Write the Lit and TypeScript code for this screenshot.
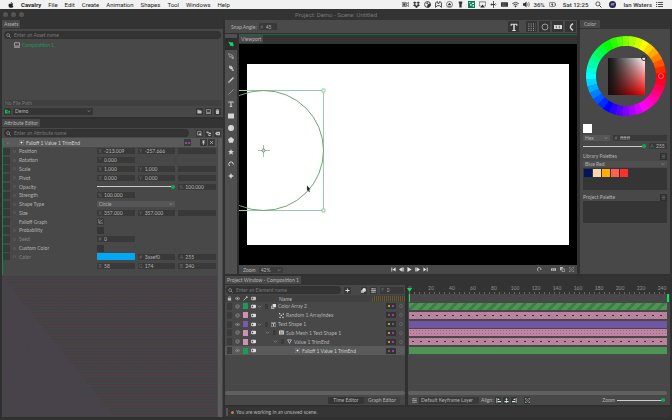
import { LitElement, html, css, svg } from "lit";
import { customElement } from "lit/decorators.js";
import { classMap } from "lit/directives/class-map.js";
import { styleMap } from "lit/directives/style-map.js";

// Every glyph sits on a 12 x 12 grid and is drawn in currentColor.
const glyphs: Record<string, unknown> = {
  apple: svg`<path fill="currentColor" d="M8 0c.1 1.5-1 2.700-2.300 2.600C5.600 1.300 6.700.200 8 0zM6.100 3.300C6.700 3.300 7.300 2.700 8.300 2.700c.9 0 1.700.5 2.200 1.200-2 1.200-1.600 3.900.4 4.600-.6 1.500-1.600 3-2.700 3-.8 0-1.100-.5-2.100-.5s-1.300.5-2.100.5C2.500 11.500 1 8.800 1 6.500c0-2.300 1.500-3.700 3.100-3.700.9 0 1.400.5 2 .5z"/>`,
  camera: svg`<path fill="none" stroke="currentColor" d="M.5 2.500h7v7h-7zM8 5l3.500-2.500v7L8 7"/><path fill="currentColor" d="M2 4h4v4H2z"/>`,
  dropbox: svg`<path fill="currentColor" d="M3 1l3 2-3 2.200L0 3zM9 1l3 2-3 2.200L6 3zM3 5.200L6 7.300 3 9.300 0 7.200zM9 5.200l3 2-3 2.100-3-2zM6 8l3 2-3 2-3-2z"/>`,
  disc: svg`<circle cx="6" cy="6" r="5" fill="none" stroke="currentColor" stroke-width="1.500"/><path fill="currentColor" d="M6 6L11 4A5 5 0 0 1 5 11zM3 4l4-2v3z"/>`,
  controller: svg`<path fill="none" stroke="currentColor" stroke-width="1.500" d="M1 11V3l3-2 1 3h2l1-3 3 2v8L8 8H4z"/>`,
  eject: svg`<circle cx="6" cy="6" r="5.200" fill="none" stroke="currentColor"/><path fill="currentColor" d="M3 7l3-4 3 4zM3 8h6v1.500H3z"/>`,
  flash: svg`<path fill="currentColor" d="M3 1h6v3L8 5v6H4V5L3 4z"/>`,
  airplay: svg`<path fill="none" stroke="currentColor" d="M3 8.500H.5v-7h11v7H9"/><path fill="currentColor" d="M6 6l4 5H2z"/>`,
  updown: svg`<path fill="currentColor" d="M5.300 0h1.400v12H5.300zM1 5.300h10v1.400H1zM3 3.500v5L1 6zM9 3.500v5L11 6z"/>`,
  keyboard: svg`<rect x="0" y="2" width="12" height="8" rx="1" fill="currentColor"/><path stroke="#bbb" d="M2 5h8M2 7.500h8" stroke-dasharray="1"/>`,
  wifi: svg`<path fill="none" stroke="currentColor" stroke-width="1.500" d="M.5 4.500q5.500-4.500 11 0M2.500 7q3.500-3 7 0"/><path fill="currentColor" d="M4 8.500q2-1.500 4 0l-2 2.500z"/>`,
  volume: svg`<path fill="currentColor" d="M0 4h2.500L6 1v10L2.500 8H0z"/><path fill="none" stroke="currentColor" d="M7.500 4q1.500 2 0 4M9.500 2q3 4 0 8"/>`,
  battery: svg`<rect x=".5" y="2.500" width="10" height="7" rx="2" fill="none" stroke="currentColor"/><path fill="currentColor" d="M11 4.500h1v3h-1zM6 3L3 6.500h2.300L5 9l3-3.500H5.800z"/>`,
  search: svg`<circle cx="5" cy="5" r="3.500" fill="none" stroke="currentColor" stroke-width="1.300"/><path stroke="currentColor" stroke-width="1.600" d="M7.500 7.500L11 11"/>`,
  siri: svg`<circle cx="6" cy="6" r="6" fill="#2b2550"/><path fill="#3cc7d8" d="M2 7q4-5 8-3-3 5-8 3z"/><path fill="#e0549b" d="M3 4q5 0 6 4-4 1-6-4z"/>`,
  list: svg`<path stroke="currentColor" stroke-width="1.500" d="M0 2.500h2M3.500 2.500H12M0 6h2M3.500 6H12M0 9.500h2M3.500 9.500H12"/>`,
  lines: svg`<path fill="currentColor" d="M3 3h6v1H3zM3 5.500h6v1H3zM3 8h6v1H3z"/>`,
  monitor: svg`<path fill="none" stroke="currentColor" stroke-width="1.500" d="M1 1.500h10v6.500H1z"/><path fill="currentColor" d="M0 9.500h12v1.700H0z"/>`,
  folder: svg`<path fill="currentColor" d="M1 2h4l1 1.500h5V10.500H1z"/>`,
  tree: svg`<path fill="currentColor" d="M0 1h3l1 1.500h3V11H0zM7.500 4H12v3H7.500zM7.500 8H12v3H7.500z"/><path fill="none" stroke="#222" stroke-width=".8" d="M7 2v9M3 6h4"/>`,
  trash: svg`<path fill="currentColor" d="M2 3.500h8L9.500 12h-7zM2 1.500h2.500V.5h3v1H10V2.800H2z"/>`,
  layers: svg`<path fill="none" stroke="currentColor" stroke-width="1.500" d="M1 1.500h9V6M1 1.500v8h4"/><circle cx="7.500" cy="8" r="2.800" fill="currentColor"/><path stroke="currentColor" stroke-width="1.500" d="M9 10l2 2"/>`,
  branch: svg`<path fill="currentColor" d="M1 1h5v3H1zM7 4h5v3H7zM6 9h5v3H6z"/><path fill="none" stroke="currentColor" stroke-width="1.300" d="M3 3l4 7M5 3l4 2"/>`,
  clear: svg`<path fill="currentColor" fill-rule="evenodd" d="M4 2h8v8H4L0 6zm1.500 2L7 6 5.500 8 8 6.800 10.500 8 9 6l1.500-2L8 5.200z"/>`,
  down: svg`<path fill="none" stroke="currentColor" stroke-width="1.500" d="M2 4l4 4 4-4"/>`,
  bullet: svg`<rect x=".5" y=".5" width="11" height="11" rx="3" fill="#4a4a4a" stroke="currentColor" stroke-width=".7"/><circle cx="6" cy="6" r="2.600" fill="#fff"/>`,
  pin: svg`<path fill="currentColor" d="M3 1h6v1.300H8V6l1.500 2H2.500L4 6V2.300H3zM5.300 8h1.400v4H5.300z"/>`,
  close: svg`<path stroke="currentColor" stroke-width="1.500" d="M2.500 2.500l7 7M9.500 2.500l-7 7"/>`,
  graph: svg`<path fill="none" stroke="currentColor" stroke-width="1.500" d="M2 0v10h10M3 9q2-5 8-7"/>`,
  select: svg`<path fill="currentColor" d="M0 1l4 1.500L10 3l.5 3.500L12 9.500 10 9l-1 2-3-2-2 1-.5-4z"/>`,
  node: svg`<path fill="none" stroke="currentColor" stroke-width="1.300" d="M1 1l3 8 1.500-2.500 3 4.500L10 9.500 7 5.500 9.500 5zM9 8h3v3H9z"/>`,
  pen: svg`<path fill="currentColor" d="M2 1l5 1 3 4-1 2-3 1-4-4zM7 10l3-2 2 3-2 1z"/><path stroke="#444" d="M2 1l4 4"/>`,
  pencil: svg`<path stroke="currentColor" stroke-width="2.300" d="M3 9L11 1"/><path fill="currentColor" d="M0 12l1.500-4 2.500 2.500z"/>`,
  line: svg`<path stroke="currentColor" stroke-width="1.300" d="M1 11L11 1"/>`,
  type: svg`<path fill="currentColor" d="M1 1h10v3.500H9.800L9.300 2.700H7.100v7.800h1.500V12H3.400v-1.500h1.500V2.700H2.700l-.5 1.800H1z"/>`,
  rect: svg`<path fill="currentColor" d="M0 1h12v10H0z"/>`,
  ellipse: svg`<circle cx="6" cy="6" r="6" fill="currentColor"/>`,
  pentagon: svg`<path fill="currentColor" d="M6 0l6 4.500-2 7H2L0 4.500z"/>`,
  star: svg`<path fill="currentColor" d="M6 0l1.700 4.200L12 4.400 8.700 7.200l1 4.400L6 9.200l-3.700 2.400 1-4.400L0 4.400l4.300-.2z"/>`,
  arc: svg`<path fill="none" stroke="currentColor" stroke-width="2" d="M3.500 10A4.500 4.500 0 1 1 10.500 7"/>`,
  spark: svg`<path fill="currentColor" d="M6 0l1.800 4.200L12 6 7.800 7.800 6 12 4.200 7.800 0 6l4.200-1.800z"/>`,
  grid: svg`<path stroke="currentColor" stroke-width="1.500" stroke-dasharray="1.500 2" d="M.5 1.500h11M.5 4.700h11M.5 8h11M.5 11h11"/>`,
  ring: svg`<circle cx="6" cy="6" r="4.500" fill="none" stroke="currentColor" stroke-width="1.300"/>`,
  bars: svg`<path fill="currentColor" d="M0 3h12v6H0z"/><path stroke="#222" d="M3.500 4v4M8 4v4"/>`,
  half: svg`<path fill="none" stroke="currentColor" stroke-width="2" d="M9 1Q1 6 9 11"/>`,
  first: svg`<path fill="currentColor" d="M1 1h2v10H1zM11 1v10L4 6z"/>`,
  prev: svg`<path fill="currentColor" d="M7 1v10L0 6zM8 1h1.500v10H8zM10.500 1H12v10h-1.500z"/>`,
  play: svg`<path fill="currentColor" d="M1 0l10 6-10 6z"/>`,
  next: svg`<path fill="currentColor" d="M5 1v10l7-5zM2.500 1H4v10H2.500zM0 1h1.500v10H0z"/>`,
  last: svg`<path fill="currentColor" d="M9 1h2v10H9zM1 1v10l7-5z"/>`,
  loop: svg`<path fill="none" stroke="currentColor" stroke-width="2" d="M4 10A4.500 4.500 0 1 1 10 6M10 6L7.500 5"/>`,
  copy: svg`<path fill="currentColor" d="M0 0h7v3H4v5H0z"/><path fill="none" stroke="currentColor" stroke-width="1.500" d="M5 4.500h6v6.500H5z"/>`,
  array: svg`<path fill="currentColor" d="M4 0h8v8H4z"/><path fill="#aaa" d="M0 4h3v5h5v3H0z"/>`,
  target: svg`<path fill="none" stroke="currentColor" stroke-width="1.300" d="M1 4V1h3M8 1h3v3M11 8v3H8M4 11H1V8"/><circle cx="6" cy="6" r="2" fill="none" stroke="currentColor"/>`,
  plus: svg`<path fill="currentColor" d="M5 1h2v4h4v2H7v4H5V7H1V5h4z"/>`,
  shapes: svg`<path fill="#aaa" d="M0 5h7v7H0z"/><circle cx="7.500" cy="4.500" r="4.500" fill="currentColor"/>`,
  sliders: svg`<path stroke="currentColor" stroke-width="1.500" d="M0 2h12M0 6h12M0 10h12M4 .5v3M8 4.500v3M5 8.500v3"/>`,
  lock: svg`<path fill="currentColor" d="M2 5h8v6H2z"/><path fill="none" stroke="currentColor" stroke-width="1.500" d="M4 5V2h4v3"/>`,
  eye: svg`<path fill="none" stroke="currentColor" stroke-width="1.300" d="M0 6q6-7 12 0-6 7-12 0z"/><circle cx="6" cy="6" r="2" fill="currentColor"/>`,
  hidden: svg`<circle cx="6" cy="6" r="4.300" fill="none" stroke="currentColor" stroke-width="1.500"/><path fill="none" stroke="currentColor" stroke-width="1.500" d="M3.500 5.500l2.500 2.500 4-5.500"/>`,
  picker: svg`<path stroke="currentColor" stroke-width="2" d="M1 11l6-6"/><path fill="currentColor" d="M6 3l3-3 3 3-3 3z"/>`,
  toggle: svg`<rect y="2" width="12" height="8" rx="2" fill="currentColor"/><path fill="#444" d="M2 4h3v4H2z"/>`,
  random: svg`<path fill="currentColor" d="M0 0h3v3H0zM4 4h3v3H4zM9 1h3v3H9zM1 9h3v3H1zM8 9h3v3H8z"/>`,
  game: svg`<path fill="#11805a" d="M0 0h12v12H0z"/><path fill="#e8fff4" d="M2 2h2v2H2zM7 3h3v2H7zM4 5h2v3H4zM8 7h2v3H8z"/>`,
  mesh: svg`<rect y="1" width="12" height="10" rx="1" fill="currentColor"/><path stroke="#444" stroke-width="1.300" d="M2 4h3M2 6.500h3M2 9h8M7 3v4M9.500 3v4"/>`,
  tri: svg`<path fill="none" stroke="currentColor" stroke-width="1.600" d="M1.500 2h9L6 10.500z"/>`,
  frame: svg`<path fill="none" stroke="currentColor" d="M.7.7h10.600v10.600H.7z"/><path fill="currentColor" d="M3 3h6v2H7v5H5V5H3z"/>`,
  alignL: svg`<path fill="#9fe0bd" d="M1 0h2v12H1z"/><path fill="currentColor" d="M4 2h4v3H4zM4 7h8v3H4z"/>`,
  alignC: svg`<path fill="#9fe0bd" d="M5 0h2v12H5z"/><path fill="currentColor" d="M4 2h4v3H4zM1 7h10v3H1z"/>`,
  alignR: svg`<path fill="#9fe0bd" d="M9 0h2v12H9z"/><path fill="currentColor" d="M4 2h4v3H4zM0 7h8v3H0z"/>`,
};

const icon = (name: string, extra = "") =>
  html`<svg class="ic ${extra}" viewBox="0 0 12 12" aria-hidden="true">${glyphs[name]}</svg>`;

const field = (prefix: string, value: string, label: string) =>
  html`<label class="field"><span>${prefix}</span><input aria-label=${label} .value=${value} /></label>`;

const dropdown = (value: string, label: string, extra = "") =>
  html`<span class="drop ${extra}"><select aria-label=${label}><option>${value}</option></select>${icon("down")}</span>`;

interface Attr { name: string; plain?: boolean; dim?: boolean; cells?: [string, string][]; kind?: string }

const attrs: Attr[] = [
  { name: "Position", cells: [["X", "-213.009"], ["Y", "-257.666"], ["", ""]] },
  { name: "Rotation", cells: [["°", "0.000"]] },
  { name: "Scale", cells: [["X", "1.000"], ["Y", "1.000"], ["", ""]] },
  { name: "Pivot", cells: [["X", "0.000"], ["Y", "0.000"], ["", ""]] },
  { name: "Opacity", kind: "slider", cells: [["%", "100.000"]] },
  { name: "Strength", cells: [["%", "100.000"]] },
  { name: "Shape Type", kind: "select" },
  { name: "Size", cells: [["X", "357.000"], ["Y", "357.000"], ["", ""]] },
  { name: "Falloff Graph", plain: true, kind: "graph" },
  { name: "Probability", kind: "check" },
  { name: "Seed", dim: true, cells: [["#", "0"]] },
  { name: "Custom Color", kind: "check" },
  { name: "Color", dim: true, kind: "color", cells: [["#", "3aaef0"], ["A", "255"]] },
  { name: "", cells: [["R", "58"], ["G", "174"], ["B", "240"]] },
];

interface Layer { name: string; depth: number; icon: string; open: boolean; tone: string; eye: string; link: boolean; bar: string }

const layers: Layer[] = [
  { name: "Color Array 2", depth: 0, icon: "array", open: true, tone: "green", eye: "hidden", link: true, bar: "hatch" },
  { name: "Random 1 ArrayIndex", depth: 1, icon: "random", open: false, tone: "pink", eye: "hidden", link: false, bar: "dotted" },
  { name: "Text Shape 1", depth: 0, icon: "frame", open: true, tone: "purple", eye: "eye", link: true, bar: "violet" },
  { name: "Sub Mesh 1 Text Shape 1", depth: 1, icon: "mesh", open: true, tone: "pink", eye: "hidden", link: true, bar: "rose" },
  { name: "Value 1 TrimEnd", depth: 2, icon: "tri", open: true, tone: "pink", eye: "hidden", link: true, bar: "dotted" },
  { name: "Falloff 1 Value 1 TrimEnd", depth: 3, icon: "bullet", open: false, tone: "green", eye: "eye", link: false, bar: "solid" },
];

const shared = css`
  :host { display: block; font-family: Lato, "Liberation Sans", sans-serif; font-size: 5px; line-height: 6px; color: #b4b4b4; }
  * { box-sizing: border-box; }
  .ic { width: 5px; height: 5px; flex: none; display: block; }
  button, input, select { font: inherit; color: inherit; border: 0; margin: 0; padding: 0; background: none; border-radius: 0; min-width: 0; outline: 0; }
  button { display: flex; align-items: center; justify-content: center; }
  input::placeholder { color: #777; opacity: 1; }
  .tab { background: #484848; align-self: flex-start; padding: 1px 2px; height: 8px; }
  .tabs { display: flex; align-items: flex-end; height: 9px; background: #333; }
  .search { display: flex; align-items: center; gap: 3px; flex: 1; height: 8px; border-radius: 4px; background: #333; padding: 0 2px; color: #b0b0b0; min-width: 0; }
  .search input { flex: 1; }
  .field { display: flex; align-items: center; gap: 3px; background: #393939; height: 6px; padding-left: 2px; min-width: 0; }
  .field span { color: #6a6a6a; width: 2px; flex: none; display: flex; justify-content: center; }
  .field input { width: 100%; height: 6px; }
  .drop { display: flex; align-items: center; background: #565656; height: 6px; padding: 0 2px; color: #b4b4b4; }
  .drop select { appearance: none; flex: 1; height: 6px; }
  .drop .ic { width: 4px; height: 4px; }
  input[type="range"] { appearance: none; height: 5px; width: 100%; background: linear-gradient(#ccc, #ccc) center / 100% 1px no-repeat; }
  input[type="range"]::-webkit-slider-thumb { appearance: none; width: 4px; height: 4px; border-radius: 2px; background: #0fa355; }
  input[type="checkbox"] { appearance: none; width: 7px; height: 7px; background: #353535; }
`;

@customElement("mac-menu")
class MacMenu extends LitElement {
  static styles = [shared, css`
    :host { background: #f1f1f1; color: #222; font-family: Roboto, "Liberation Sans", sans-serif; font-size: 6px; line-height: 9px; }
    nav { display: flex; height: 9px; padding: 0 9px 0 8px; align-items: center; justify-content: space-between; }
    .side, .tray { display: flex; align-items: center; gap: 7px; }
    .side > .ic { width: 6px; height: 6px; }
    .side > button { height: 9px; }
    .tray { gap: 4px; color: #333; font-weight: 500; }
    .tray .ic { width: 7px; height: 7px; }
    .app { font-weight: 700; }
    .wide { margin: 0 3px; }
  `];
  render() {
    return html`<nav>
      <div class="side">
        ${icon("apple")}<button class="app">Cavalry</button>
        ${["File", "Edit", "Create", "Animation", "Shapes", "Tool", "Windows", "Help"].map((m) => html`<button>${m}</button>`)}
      </div>
      <div class="tray">
        ${["camera", "dropbox", "disc", "controller", "eject", "flash", "game", "airplay", "updown", "keyboard", "wifi", "volume"].map((n) => icon(n))}
        <span>36%</span>${icon("battery")}<span class="wide">Sat 12:25</span>
        ${icon("search")}${icon("siri", "wide")}<span>Ian Waters</span>${icon("list")}
      </div>
    </nav>`;
  }
}

@customElement("asset-panel")
class AssetPanel extends LitElement {
  static styles = [shared, css`
    .body { background: #484848; padding: 2px; }
    .row { display: flex; align-items: center; }
    .list { height: 61px; padding: 2px 0 0 10px; }
    .item { display: flex; align-items: center; gap: 2px; color: #169a58; height: 7px; }
    .item .ic { color: #bbb; width: 6px; height: 6px; }
    .path { background: #404040; color: #777; height: 6px; padding-left: 1px; }
    .foot { gap: 2px; height: 8px; margin-top: 1px; }
    .foot .drop { width: 80px; background: #353535; height: 7px; }
    .foot button { width: 7px; height: 7px; background: #353535; color: #bbb; }
    .foot .tree { color: #17b360; }
    .grow { flex: 1; }
  `];
  render() {
    return html`
      <div class="tabs"><span class="tab">Assets</span></div>
      <div class="body">
        <label class="search">${icon("search")}<input placeholder="Enter an Asset name" aria-label="Asset name" /></label>
        <div class="list"><div class="item">${icon("monitor")}<span>Composition 1</span></div></div>
        <div class="path">No File Path</div>
        <div class="row foot">
          <button class="tree" aria-label="Project">${icon("tree")}</button>
          ${dropdown("Demo", "Project")}
          <span class="grow"></span>
          <button aria-label="New folder">${icon("folder")}</button>
          <button aria-label="New composition">${icon("monitor")}</button>
          <button aria-label="Delete">${icon("trash")}</button>
        </div>
      </div>`;
  }
}

@customElement("attribute-editor")
class AttributeEditor extends LitElement {
  static styles = [shared, css`
    :host { display: flex; flex-direction: column; }
    .body { background: #484848; flex: 1; display: flex; flex-direction: column; }
    .find { display: flex; align-items: center; gap: 2px; padding: 1px 2px; height: 10px; }
    .find button { width: 7px; height: 7px; background: #383838; color: #bbb; }
    .find .search { margin-right: 5px; }
    .main { display: flex; flex: 1; gap: 1px; padding-right: 1px; }
    .col { flex: 1; min-width: 0; display: flex; flex-direction: column; }
    .bar { width: 4px; background: #5c5c5c; }
    .group { border-left: 1px solid #118c4c; margin-bottom: 1px; padding-bottom: 5px; }
    .head { display: flex; align-items: center; gap: 1px; background: #5a5a5a; height: 9px; padding: 0 2px 0 3px; color: #d0d0d0; }
    .head .name { flex: 1; padding-left: 1px; }
    .head > .ic:first-child { width: 4px; height: 4px; margin-right: 8px; color: #999; }
    .head button, .pair { width: 7px; height: 7px; background: #393939; }
    .pair { display: flex; align-items: center; justify-content: space-around; margin-right: 8px; padding: 0 1px; }
    .dot { width: 2px; height: 2px; border-radius: 1px; background: #777; }
    .hot { background: #d336d8; }
    .rows { display: grid; grid-template-rows: repeat(14, 1fr); height: 123px; padding-right: 1px; }
    .row { display: grid; grid-template-columns: 7px 3px 75px repeat(3, minmax(0, 1fr)); column-gap: 3px; align-items: center; }
    .key { height: 7px; background: #393939; }
    .port { width: 3px; height: 3px; border: 1px solid #606060; border-radius: 2px; }
    .name { white-space: nowrap; }
    .dim { color: #828282; }
    .two { grid-column: span 2; }
    .well { height: 7px; background: #02a7f6; }
    .graph { width: 7px; height: 7px; background: #393939; color: #aaa; }
    .noise { flex: 1; min-height: 138px; background:
      repeating-linear-gradient(180deg, transparent 0 9px, #63393966 9px 10px),
      repeating-linear-gradient(90deg, #36494766 0 1px, transparent 1px 3px),
      repeating-linear-gradient(180deg, #4d3a46 0 1px, #444444 1px 3px); }
    .wedge { height: 100%; width: 113px; max-width: 100%; clip-path: polygon(0 0, 100% 100%, 0 100%); background:
      repeating-linear-gradient(32deg, #5b385b77 0 1px, transparent 1px 3px),
      repeating-linear-gradient(90deg, #3a474455 0 1px, transparent 1px 3px), #454447; }
  `];
  private controls(a: Attr) {
    const cells = (a.cells ?? []).map(([p, v]) => field(p, v, `${a.name} ${p}`));
    switch (a.kind) {
      case "slider": return html`<input class="two" type="range" value="100" aria-label=${a.name} />${cells}`;
      case "select": return dropdown("Circle", a.name, "two");
      case "graph": return html`<button class="graph" aria-label=${a.name}>${icon("graph")}</button>`;
      case "check": return html`<input type="checkbox" aria-label=${a.name} />`;
      case "color": return html`<button class="well" aria-label="Color"></button>${cells}`;
      default: return cells;
    }
  }
  render() {
    return html`
      <div class="tabs"><span class="tab">Attribute Editor</span></div>
      <div class="body">
        <div class="find">
          <label class="search">${icon("search")}<input placeholder="Enter an Attribute name" aria-label="Attribute name" /></label>
          <button aria-label="Layers">${icon("layers")}</button>
          <button aria-label="Connections">${icon("branch")}</button>
          <button aria-label="Clear">${icon("clear")}</button>
        </div>
        <div class="main">
          <div class="col">
            <section class="group">
              <header class="head">
                ${icon("down")}${icon("bullet")}<span class="name">Falloff 1 Value 1 TrimEnd</span>
                <span class="pair"><i class="dot"></i><i class="dot hot"></i></span>
                <button aria-label="Pin">${icon("pin")}</button><button aria-label="Close">${icon("close")}</button>
              </header>
              <div class="rows">
                ${attrs.map((a) => html`<div class="row">
                  <span class=${classMap({ key: a.name !== "" })}></span>
                  <span class=${classMap({ port: a.name !== "" && !a.plain })}></span>
                  <span class=${classMap({ name: true, dim: !!a.dim })}>${a.name}</span>
                  ${this.controls(a)}
                </div>`)}
              </div>
            </section>
            <div class="noise"><div class="wedge"></div></div>
          </div>
          <div class="bar"></div>
        </div>
      </div>`;
  }
}

@customElement("view-port")
class ViewPort extends LitElement {
  static styles = [shared, css`
    :host { display: flex; flex-direction: column; min-width: 0; }
    .snap { display: flex; align-items: center; gap: 2px; height: 13px; background: #4a4a4a; padding: 0 1px 0 6px; }
    .snap .field { width: 18px; height: 7px; }
    .snap button { width: 11px; height: 11px; background: #353535; color: #ddd; }
    .snap button .ic { width: 8px; height: 8px; }
    .snap .gap { margin-right: 5px; }
    .snap .pale { color: #aaa; }
    .grow { flex: 1; }
    .work { display: flex; flex: 1; gap: 2px; margin-top: 1px; }
    .tools { width: 12px; background: #4f4f4f; padding-top: 4px; display: flex; flex-direction: column; }
    .tools button { height: 12px; color: #d5d5d5; }
    .tools button .ic { width: 6px; height: 6px; }
    .tools .on { background: #2d2d2d; color: #10dc5b; }
    .tools .thin { color: #aaa; }
    .stage { flex: 1; min-width: 0; display: flex; flex-direction: column; border-top: 1px solid #176b42; }
    .canvas { display: block; width: 100%; background: #000; flex: 1; }
    .under { display: flex; align-items: center; gap: 3px; height: 9px; background: #484848; padding: 0 3px 0 4px; color: #bbb; }
    .under button { width: 6px; height: 7px; }
    .under .drop { width: 24px; background: #3c3c3c; }
    .play { flex: 1; display: flex; justify-content: center; gap: 2px; color: #e4e4e4; }
    .end { display: flex; gap: 3px; }
    .end button:first-child { margin-right: 5px; }
  `];
  render() {
    const tools = ["select", "node", "pen", "pencil", "line", "type", "rect", "ellipse", "pentagon", "star", "arc", "spark"];
    return html`
      <div class="snap">
        <span>Snap Angle:</span>${field("#", "45", "Snap Angle")}<span class="grow"></span>
        <button class="gap" aria-label="Text">${icon("type")}</button>
        <button aria-label="Snap to grid" class="pale">${icon("grid")}</button>
        <button class="pale" aria-label="Guides">${icon("ring")}</button>
        <button aria-label="Snap">${icon("bars")}</button><button aria-label="Magnet">${icon("half")}</button>
      </div>
      <div class="work">
        <div class="tools">${tools.map((t, i) => html`<button aria-label=${t} class=${classMap({ on: i === 0, thin: t === "line" || t === "node" })}>${icon(t)}</button>`)}</div>
        <div class="stage">
          <div class="tabs"><span class="tab">Viewport</span></div>
          <svg class="canvas" viewBox="0 0 338 221" preserveAspectRatio="xMidYMid meet" role="img" aria-label="Composition view">
            <path fill="#fff" d="M8 20h322v181H8z" />
            <g fill="none" stroke="#93cfaa" stroke-width="1">
              <path d="M0 46.500H84.500V166.500H0" />
              <path fill="#fff" d="M83 45h3v3h-3zM83 165h3v3h-3z" />
            </g>
            <circle cx="24.500" cy="106.500" r="60" fill="none" stroke="#76a078" stroke-width="1" />
            <path stroke="#86b795" stroke-width=".8" d="M19 106.500h12M24.500 101v12" />
            <circle cx="24.500" cy="106.500" r="1.600" fill="#ddd" stroke="#555" stroke-width=".6" />
            <path fill="#222" stroke="#888" stroke-width=".3" d="M68 141.500l3.400 3.800-1.400.300.900 2-1 .5-.9-2-1 .900z" />
          </svg>
          <div class="under">
            <span>Zoom</span>${dropdown("42%", "Zoom")}
            <span class="play">${["first", "prev", "play", "next", "last"].map((n) => html`<button aria-label=${n}>${icon(n)}</button>`)}</span>
            <span class="end">${["loop", "bars", "copy", "target"].map((n) => html`<button aria-label=${n}>${icon(n)}</button>`)}</span>
          </div>
        </div>
      </div>`;
  }
}

@customElement("color-panel")
class ColorPanel extends LitElement {
  static styles = [shared, css`
    :host { display: flex; flex-direction: column; width: 90px; }
    .body { background: #484848; flex: 1; padding: 7px 3px 0; }
    .tab { padding-left: 4px; padding-right: 4px; }
    .wheel { display: block; width: 80px; height: 80px; margin-left: 3px; }
    .swatch { width: 9px; height: 9px; background: #fff; margin-top: 8px; }
    .row { display: flex; align-items: center; gap: 3px; height: 6px; margin-top: 2px; }
    .row .drop { width: 27px; }
    .row .field { flex: 1; }
    .row .small { flex: none; width: 18px; display: flex; }
    .title { display: flex; justify-content: space-between; align-items: center; margin-top: 3px; height: 8px; }
    .title button { width: 7px; height: 7px; background: #2f2f2f; color: #888; }
    .title .ic { width: 7px; height: 7px; }
    .bank { height: 22px; background: #353535; display: flex; gap: 1px; padding: 1px; }
    .wide { margin: 1px 0; background: #4f4f4f; }
    .chip { width: 8px; height: 8px; }
  `];
  render() {
    const steps = 36;
    const point = (r: number, deg: number) => {
      const t = (deg * Math.PI) / 180;
      return `${40 + r * Math.cos(t)} ${40 - r * Math.sin(t)}`;
    };
    const wedges = Array.from({ length: steps }, (_, i) => {
      const a = i * 10 - 5, b = i * 10 + 5.5;
      return svg`<path fill="hsl(${i * 10} 100% 50%)" d="M${point(40, a)}A40 40 0 0 0 ${point(40, b)}L${point(30, b)}A30 30 0 0 1 ${point(30, a)}z" />`;
    });
    const chips = ["#06145c", "#fbd5b2", "#ffb000", "#ff6150", "#ff302c"];
    return html`
      <div class="tabs"><span class="tab">Color</span></div>
      <div class="body">
        <svg class="wheel" viewBox="0 0 80 80" role="img" aria-label="Color wheel">
          <defs>
            <linearGradient id="tint" x2="0" y2="1"><stop stop-color="#fff" /><stop offset="1" stop-color="#f00" /></linearGradient>
            <linearGradient id="shade"><stop stop-color="#111" /><stop offset=".15" stop-color="#111" stop-opacity=".9" /><stop offset="1" stop-color="#000" stop-opacity="0" /></linearGradient>
          </defs>
          ${wedges}
          <path fill="url(#tint)" d="M22 22h37v37H22z" /><path fill="url(#shade)" d="M22 22h37v37H22z" />
          <g fill="none" stroke="#333" stroke-width="1"><circle cx="58" cy="22" r="2.500" /><circle cx="75" cy="40" r="2.500" stroke="#ff6a6a" /></g>
        </svg>
        <div class="swatch"></div>
        <div class="row">${dropdown("Hex", "Color mode")}${field("#", "ffffff", "Hex value")}</div>
        <div class="row"><input type="range" value="100" aria-label="Alpha" /><span class="small">${field("A", "255", "Alpha value")}</span></div>
        <div class="title"><span>Library Palettes</span><button aria-label="Library menu">${icon("lines")}</button></div>
        ${dropdown("Blue Red", "Palette", "wide")}
        <div class="bank">${chips.map((c) => html`<span class="chip" style=${styleMap({ background: c })}></span>`)}</div>
        <div class="title"><span>Project Palette</span><button aria-label="Project menu">${icon("lines")}</button></div>
        <div class="bank"></div>
      </div>`;
  }
}

@customElement("time-line")
class TimeLine extends LitElement {
  static styles = [shared, css`
    .split { display: flex; gap: 3px; }
    .tree { width: 180px; flex: none; background: #484848; }
    .find { display: flex; align-items: center; gap: 3px; height: 10px; padding: 1px; }
    .find .search { flex: none; width: 115px; }
    .find button { width: 7px; height: 7px; background: #383838; color: #ddd; }
    .find .pad { margin-left: 7px; }
    .find .field { width: 26px; height: 7px; }
    .head, .row { display: flex; align-items: center; gap: 3px; padding-left: 2px; }
    .head { height: 7px; color: #bbb; background: #414141; }
    .head .name { padding-left: 20px; flex: 1; }
    .hatched { width: 35px; height: 6px; background: repeating-linear-gradient(90deg, #6b5a1f 0 1px, #3a3a4a 1px 2px); clip-path: polygon(12% 0, 100% 0, 100% 100%, 0 100%); }
    .rows, .bars { display: grid; grid-template-rows: repeat(6, 1fr); height: 53px; }
    .row { padding-right: 2px; }
    .row > .ic { color: #999; }
    .row .lock { width: 5px; height: 7px; background: #3b3b3b; flex: none; }
    .box { width: 3px; height: 5px; flex: none; }
    .filled { background: #3b3b3b; }
    .sel { background: #5a5a5a; color: #ccc; }
    .tag { width: 5px; height: 6px; flex: none; }
    .green { background: #1f9a55; } .pink { background: #cf8fae; } .purple { background: #7a58ad; }
    .row .on, .row .kind { color: #ddd; }
    .blank { width: 5px; flex: none; }
    .indent { flex: none; margin-left: -5px; }
    .label { flex: 1; white-space: nowrap; margin-left: -1px; }
    .pair { display: flex; gap: 2px; background: #333; padding: 2px; }
    .dot { width: 2px; height: 2px; border-radius: 1px; background: #777; }
    .link { background: #e8bb4a; } .hot { background: #d336d8; }
    .port { width: 4px; height: 4px; border: 1px solid #606060; border-radius: 2px; }
    .rest { height: 36px; }
    .scroll { height: 4px; background: #606060; border-radius: 2px; }
    .modes { display: flex; height: 10px; justify-content: flex-end; align-items: center; padding-right: 5px; }
    .modes button { width: 36px; height: 7px; background: #404040; }
    .modes .on { background: #353535; }
    .track { flex: 1; min-width: 0; background: #484848; padding-right: 3px; }
    .ruler { background: #333; height: 9px; margin-right: -3px; padding-right: 2px; }
    .nums { display: flex; justify-content: space-between; color: #909090; height: 6px; margin-left: -4px; }
    .nums span { width: 12px; text-align: center; }
    .ticks { height: 3px; margin: 0 2px 0 1px; background: repeating-linear-gradient(90deg, #666 0 1px, transparent 1px 5px) bottom / 100% 2px no-repeat; }
    .work { position: relative; height: 8px; margin: 0 -2px 0 1px; border-left: 1px solid #10dc5b; border-right: 2px solid #10dc5b; }
    .head-mark { position: absolute; left: -3px; top: -6px; width: 5px; height: 4px; background: #10dc5b; clip-path: polygon(0 0, 100% 0, 50% 100%); }
    .bars { align-items: center; margin-left: 1px; }
    .clip { height: 7px; }
    .hatch { background: repeating-linear-gradient(135deg, #4e9455 0 4px, #3d7d48 4px 7px); }
    .dotted { background: radial-gradient(#3d2c38 1px, transparent 1px) 0 0 / 8px 7px, repeating-linear-gradient(45deg, #bd86a4 0 1px, #b97f96 1px 2px); }
    .rose { background: radial-gradient(#8f6f8c 1px, transparent 1px) 0 0 / 3px 3px, #c483a3; }
    .violet { background: repeating-linear-gradient(90deg, #7355a3 0 1px, #6a59a0 1px 2px); }
    .solid { background: #4e9455; }
    .foot { display: flex; align-items: center; gap: 2px; height: 10px; padding: 0 2px 0 4px; }
    .foot .layer { width: 60px; background: #393939; height: 7px; padding-left: 2px; justify-content: flex-start; }
    .foot .sq { width: 6px; height: 7px; color: #ddd; background: #353535; }
    .foot .zoom { flex: none; width: 48px; }
    .grow { flex: 1; }
    .pushed { margin-left: 5px; }
  `];
  render() {
    return html`
      <div class="tabs"><span class="tab">Project Window - Composition 1</span></div>
      <div class="split">
        <div class="tree">
          <div class="find">
            <label class="search">${icon("search")}<input placeholder="Enter an Element name" aria-label="Element name" /></label>
            <button aria-label="Add">${icon("plus")}</button>
            <button class="pad" aria-label="Shapes">${icon("shapes")}</button><button aria-label="Filters">${icon("sliders")}</button>${field("F", "0", "Frame")}
          </div>
          <div class="head">${icon("lock")}${icon("eye")}${icon("picker")}${icon("toggle")}<span class="name">Name</span><span class="hatched"></span></div>
          <div class="rows">
            ${layers.map((l) => html`<div class=${classMap({ row: true, sel: l.depth === 3 })}>
              <span class="lock"></span>${icon(l.eye)}<span class="tag ${l.tone}"></span>${icon("toggle", "on")}
              <span class="indent" style=${styleMap({ width: `${l.depth * 8}px` })}></span>
              ${l.open ? icon("down") : html`<span class="blank"></span>`}<span class=${classMap({ box: true, filled: l.open })}></span>
              ${icon(l.icon, "kind")}<span class="label">${l.name}</span>
              <span class="pair"><i class=${classMap({ dot: true, link: l.link })}></i><i class=${classMap({ dot: true, hot: l.icon !== "frame" })}></i></span>
              <i class="port"></i>
            </div>`)}
          </div>
          <div class="rest"></div>
          <div class="scroll"></div>
          <div class="modes"><button class="on">Time Editor</button><button>Graph Editor</button></div>
        </div>
        <div class="track">
          <div class="ruler">
            <div class="nums">${Array.from({ length: 13 }, (_, i) => html`<span>${i * 20}</span>`)}</div>
            <div class="ticks"></div>
          </div>
          <div class="work"><i class="head-mark"></i></div>
          <div class="bars">${layers.map((l) => html`<div class="clip ${l.bar}"></div>`)}</div>
          <div class="rest"></div>
          <div class="scroll"></div>
          <div class="foot">
            ${icon("sliders")}<button class="layer">Default Keyframe Layer</button>
            <span>Align:</span>
            ${["alignL", "alignC", "alignR"].map((n) => html`<button class="sq" aria-label=${n}>${icon(n)}</button>`)}
            <button class="sq pushed" aria-label="Fit">${icon("target")}</button>
            <span class="grow"></span><span>Zoom</span><input class="zoom" type="range" value="100" aria-label="Timeline zoom" />
          </div>
        </div>
      </div>`;
  }
}

@customElement("app-root")
class AppRoot extends LitElement {
  static styles = [shared, css`
    :host { background: #303030; min-height: 100vh; display: flex; flex-direction: column; overflow: hidden; }
    .title { display: grid; grid-template-columns: 1fr auto 1fr; align-items: center; height: 11px; background: #333; color: #777; font-family: Roboto, "Liberation Sans", sans-serif; font-size: 6px; }
    .lights { display: flex; gap: 3px; padding-left: 3px; }
    .lights i { width: 5px; height: 5px; border-radius: 3px; background: #555; }
    .window { flex: 1; display: flex; gap: 2px; padding: 0 2px 3px; }
    .left { width: 221px; flex: none; display: flex; flex-direction: column; gap: 2px; }
    .left attribute-editor { flex: 1; }
    .right { flex: 1; min-width: 0; display: flex; flex-direction: column; gap: 2px; }
    .upper { display: flex; gap: 3px; }
    .upper view-port { flex: 1; }
    .status { display: flex; align-items: center; gap: 2px; height: 10px; background: #353535; padding-left: 1px; }
    .grip { width: 2px; height: 8px; background: #555; margin-right: 1px; }
    .warn { width: 3px; height: 3px; border-radius: 2px; background: #e0792f; }
  `];
  render() {
    return html`
      <mac-menu></mac-menu>
      <div class="title"><span class="lights"><i></i><i></i><i></i></span><span>Project: Demo - Scene: Untitled</span><span></span></div>
      <div class="window">
        <div class="left"><asset-panel></asset-panel><attribute-editor></attribute-editor></div>
        <div class="right">
          <div class="upper"><view-port></view-port><color-panel></color-panel></div>
          <time-line></time-line>
          <div class="status"><i class="grip"></i><i class="warn"></i><span>You are working in an unsaved scene.</span></div>
        </div>
      </div>`;
  }
}
